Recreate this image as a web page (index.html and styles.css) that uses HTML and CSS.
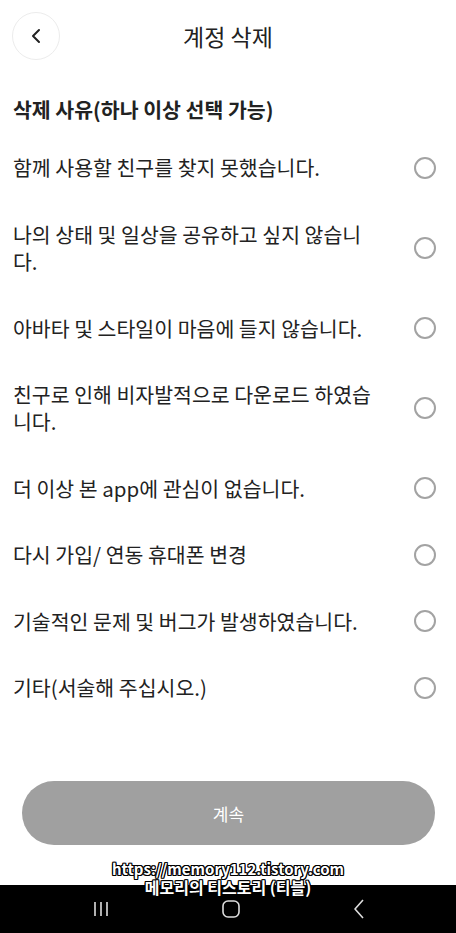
FILE: index.html
```html
<html><head><meta charset="UTF-8">
    <link rel="stylesheet" href="styles.css">
</head>
<body>
    <div id="ekran">
        <div id="naglowek">
            <div class="wstecz">
                <svg width="14" height="16" viewBox="0 0 14 16"><path d="M10 2 L4 8 L10 14" fill="none" stroke="#222" stroke-width="2" stroke-linecap="round" stroke-linejoin="round"/></svg>
            </div>
            <div id="tytul">계정 삭제</div>
            <div class="pusty"></div>
        </div>

        <div id="tresc">
            <div id="podtytul">삭제 사유(하나 이상 선택 가능)</div>
            <div id="lista">
                <div class="pozycja"><div class="napis">함께 사용할 친구를 찾지 못했습니다.</div><div class="radio"></div></div>
                <div class="pozycja"><div class="napis">나의 상태 및 일상을 공유하고 싶지 않습니다.</div><div class="radio"></div></div>
                <div class="pozycja"><div class="napis">아바타 및 스타일이 마음에 들지 않습니다.</div><div class="radio"></div></div>
                <div class="pozycja"><div class="napis">친구로 인해 비자발적으로 다운로드 하였습니다.</div><div class="radio"></div></div>
                <div class="pozycja"><div class="napis">더 이상 본 app에 관심이 없습니다.</div><div class="radio"></div></div>
                <div class="pozycja"><div class="napis">다시 가입/ 연동 휴대폰 변경</div><div class="radio"></div></div>
                <div class="pozycja"><div class="napis">기술적인 문제 및 버그가 발생하였습니다.</div><div class="radio"></div></div>
                <div class="pozycja"><div class="napis">기타(서술해 주십시오.)</div><div class="radio"></div></div>
            </div>
        </div>

        <div id="przycisk">
            <div id="dalej">계속</div>
        </div>

        <div id="stopka">
            <svg width="16" height="16" viewBox="0 0 16 16"><path d="M2 1 V15 M8 1 V15 M14 1 V15" stroke="#ddd" stroke-width="1.6"/></svg>
            <svg width="18" height="18" viewBox="0 0 18 18"><rect x="1" y="1" width="16" height="16" rx="5" fill="none" stroke="#ddd" stroke-width="1.6"/></svg>
            <svg width="12" height="20" viewBox="0 0 12 20"><path d="M10 1 L2 10 L10 19" fill="none" stroke="#ddd" stroke-width="1.6" stroke-linejoin="round"/></svg>
        </div>

        <div id="znak">
            <div>https://memory112.tistory.com</div>
            <div class="druga">메모리의 티스토리 (티블)</div>
        </div>
    </div>
</body></html>
```

FILE: styles.css
```css
body {
    margin: 0;
    font-family: "Noto Sans CJK KR", "Noto Sans", sans-serif;
    background-color: white;
    color: #222;
}

#ekran {
    width: 456px;
    height: 933px;
    display: flex;
    flex-direction: column;
    position: relative;
    overflow: hidden;
}

#naglowek {
    height: 72px;
    padding: 0 12px;
    display: flex;
    align-items: center;
    justify-content: space-between;
    box-sizing: border-box;
}

.wstecz {
    width: 46px;
    height: 46px;
    border: 1px solid #ececec;
    border-radius: 50%;
    display: flex;
    align-items: center;
    justify-content: center;
}

.pusty {
    width: 48px;
}

#tytul {
    font-size: 23px;
    line-height: 28px;
}

#tresc {
    flex: 1;
}

#podtytul {
    margin-top: 24px;
    padding: 0 13px;
    font-size: 20.5px;
    font-weight: bold;
    line-height: 27px;
}

#lista {
    margin-top: 11px;
}

.pozycja {
    display: flex;
    align-items: center;
    padding: 20px 20px 20px 13px;
}

.pozycja:nth-child(n+3) {
    margin-top: -0.5px;
}

.napis {
    width: 361px;
    font-size: 20.5px;
    line-height: 27px;
}

.radio {
    margin-left: auto;
    width: 18px;
    height: 18px;
    border: 2px solid #a3a3a3;
    border-radius: 50%;
}

#przycisk {
    padding: 0 21px 40px 22px;
}

#dalej {
    height: 64px;
    border-radius: 32px;
    background-color: #a0a0a0;
    color: white;
    font-size: 17px;
    display: flex;
    align-items: center;
    justify-content: center;
}

#stopka {
    height: 48px;
    background-color: black;
    display: flex;
    align-items: center;
    justify-content: space-between;
    padding: 0 91px 0 93px;
}

#znak {
    position: absolute;
    left: 0;
    right: 0;
    top: 860px;
    text-align: center;
    color: white;
    font-weight: bold;
    font-size: 15px;
    line-height: 18px;
    text-shadow: 1px 0 0 #000, -1px 0 0 #000, 0 1px 0 #000, 0 -1px 0 #000,
        1px 1px 0 #000, -1px -1px 0 #000, 1px -1px 0 #000, -1px 1px 0 #000;
}

#znak .druga {
    font-size: 16px;
}
```
